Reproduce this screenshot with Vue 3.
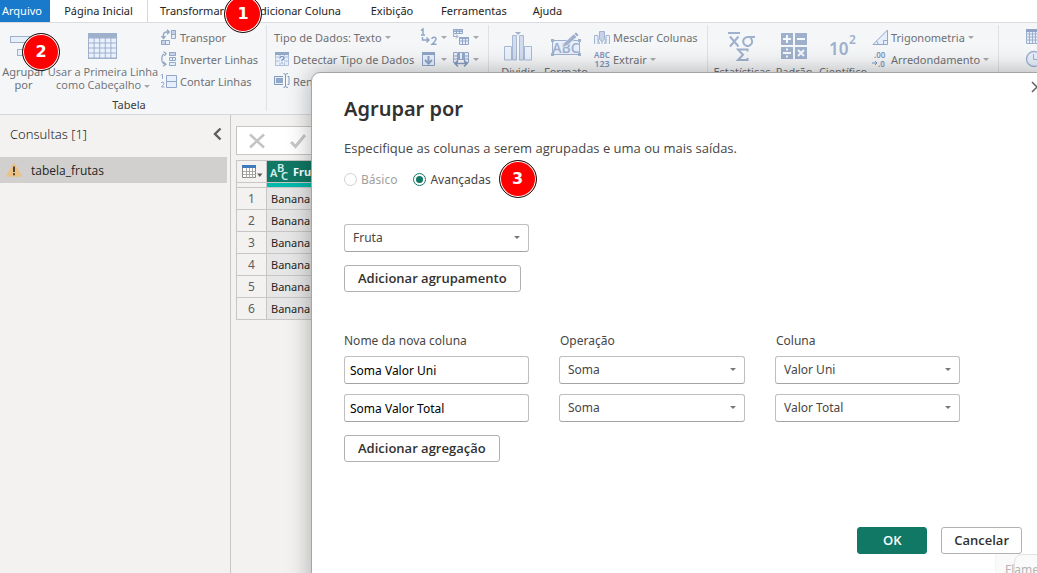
<script setup>
import { ref, reactive } from 'vue'

const tabs = ['Ferramentas', 'Ajuda']
const rows = ['Banana', 'Banana', 'Banana', 'Banana', 'Banana', 'Banana']
const mode = ref('advanced')
const groupColumn = ref('Fruta')
const aggregations = reactive([
  { name: 'Soma Valor Uni', op: 'Soma', column: 'Valor Uni' },
  { name: 'Soma Valor Total', op: 'Soma', column: 'Valor Total' }
])
</script>

<template>
  <div class="app">
    <nav class="tabs">
      <button class="tab file">Arquivo</button>
      <button class="tab home">Página Inicial</button>
      <button class="tab active">Transformar</button>
      <button class="tab add">Adicionar Coluna</button>
      <button class="tab view">Exibição</button>
      <button v-for="t in tabs" :key="t" class="tab">{{ t }}</button>
    </nav>

    <div class="ribbon">
      <section class="group g-table">
        <div class="tools">
          <button class="big b-group">
            <svg width="30" height="30" viewBox="0 0 30 30" fill="#e6effb" stroke="#9fb0cd">
              <rect x="1.5" y="4.500" width="24" height="6" /><rect x="8.500" y="17.500" width="17" height="6" />
            </svg>
            <span>Agrupar<br>por</span>
          </button>
          <button class="big b-first">
            <svg width="30" height="30" viewBox="0 0 30 30">
              <rect x="0" y="1" width="29" height="26" fill="#9fb0cd" />
              <g fill="#e9f1fc">
                <template v-for="r in 4" :key="r">
                  <rect v-for="c in 5" :key="c" :x="c * 5.6 - 4.600" :y="r * 5 + 1.500" width="4.600" height="4" />
                </template>
              </g>
            </svg>
            <span>Usar a Primeira Linha<br>como Cabeçalho <i class="caret"></i></span>
          </button>
          <div class="stack">
            <button class="small">
              <svg width="16" height="16" viewBox="0 0 16 16" fill="none" stroke="#93a7c8">
                <path d="M10.500 1.500h4v8h-4zM10.500 5.500h4M.5 11.500h8v4h-8zM4.500 11.500v4" fill="#e6effb" />
                <path d="M10.500 1.500h4v4h-4zM.5 11.500h4v4h-4z" fill="#c5d2e8" />
                <path d="M2.500 9V6q0-3 3-3H8M.5 7l2 2.500L4.500 7M6 .8 8.300 3 6 5.200" stroke-width="1.300" />
              </svg>Transpor
            </button>
            <button class="small">
              <svg width="16" height="16" viewBox="0 0 16 16" fill="none" stroke="#93a7c8">
                <path d="M8.500 1.500h6v3h-6zM8.500 6.500h6v3h-6zM8.500 11.500h6v3h-6zM11.500 6.500v3" fill="#e6effb" />
                <path d="M8.500 1.500h6v3h-6z" fill="#c5d2e8" />
                <path d="M3 3Q.8 4 .8 8T4 13.300M2.500.8 5 2.500 3.500 5M2 10.800l3 2.500-3 2" stroke-width="1.300" />
              </svg>Inverter Linhas
            </button>
            <button class="small">
              <svg width="16" height="16" viewBox="0 0 16 16" fill="#e6effb" stroke="#93a7c8">
                <path d="M5.500 2.500h10v12h-10zM5.500 8.500h10" />
                <path d="M0 2.500 1.500 1v5M0 9.500q3-1 3 .7Q3 11.500.5 14h3" fill="none" />
              </svg>Contar Linhas
            </button>
          </div>
        </div>
        <div class="group-name">Tabela</div>
      </section>

      <section class="group g-any">
        <div class="tools">
          <div class="stack type">
            <button class="small">Tipo de Dados: Texto <i class="caret"></i></button>
            <button class="small">
              <svg width="16" height="16" viewBox="0 0 16 16" fill="#e6effb" stroke="#b1c0da">
                <path d="M1.500 1.500h13v13h-13zM1.500 6h13M1.500 10h13M6 3v11M10.500 3v11" />
                <path d="M1 1h14v3H1z" fill="#93a7c8" stroke="none" />
                <path d="M5.500 5h5v7h-5z" stroke="none" />
                <path d="M6 7.200Q6 5.500 8 5.500t2 1.600Q10 8.500 8 9v1M8 11.300v1.200" fill="none" stroke="#7189b3" stroke-width="1.200" />
              </svg>Detectar Tipo de Dados
            </button>
            <button class="small">
              <svg width="16" height="16" viewBox="0 0 16 16" fill="none" stroke="#8399be">
                <path d="M9 3.500H.5v8H9" fill="#e6effb" /><path d="M2 5h7v5H2z" fill="#93a7c8" stroke="none" />
                <path d="M9.500.5q2 0 2 1.500v11q0 1.500-2 1.500M14 .5q-2.500 0-2.500 1.500M14 14.500q-2.500 0-2.500-1.500M13.500 3.500h1.500v8h-1.500" />
              </svg>Renomear
            </button>
          </div>
          <div class="icon-grid">
            <button class="small" aria-label="Substituir Valores">
              <svg width="18" height="18" viewBox="0 0 18 18" fill="none" stroke="#8fa4c6" stroke-width="1.400">
                <path d="M1 2.500 3 1v6M1 7h4M2.500 9v3h6M6.500 9.500 9 12l-2.500 2.500M12 11q0-1.800 2-1.800t2 1.800q0 1.500-4 5.300h4.500" />
              </svg><i class="caret"></i>
            </button>
            <button class="small" aria-label="Dinamizar">
              <svg width="18" height="18" viewBox="0 0 18 18" fill="#e6effb" stroke="#93a7c8">
                <path d="M1.500 1.500h9v4h-9zM1.500 3.500h9M4.500 1.500v4M7.500 1.500v4M7.500 9.500h9v7h-9zM7.500 13h9M10.500 11v5M13.500 11v5" />
                <path d="M1 1h10v1.500H1zM7 9h10v2H7z" fill="#93a7c8" stroke="none" />
                <path d="M1.500 6v2.500h4M4 6.500l2 2-2 2" fill="none" />
              </svg><i class="caret"></i>
            </button>
            <button class="small" aria-label="Preencher">
              <svg width="18" height="18" viewBox="0 0 18 18" fill="#e6effb" stroke="#8fa4c6">
                <path d="M2.500 2.500h12v13h-12z" /><path d="M2 2h13v3H2z" fill="#8fa4c6" stroke="none" />
                <path d="M8.500 6v7M5 10l3.500 3.500L12 10" fill="none" stroke-width="2" />
              </svg><i class="caret"></i>
            </button>
            <button class="small" aria-label="Mover">
              <svg width="18" height="18" viewBox="0 0 18 18" fill="#e6effb" stroke="#93a7c8">
                <path d="M1.500 2.500h4v10h-4zM12.500 2.500h4v10h-4zM1.500 6h4M1.500 9h4M12.500 6h4M12.500 9h4" />
                <path d="M6 2h6v8H6z" fill="#93a7c8" stroke="none" /><path d="M8 3h2v6H8z" stroke="none" />
                <path d="M3 13.500h12M6 10.500l-3 3 3 3M12 10.500l3 3-3 3" fill="none" stroke="#8399be" stroke-width="1.600" />
              </svg><i class="caret"></i>
            </button>
          </div>
        </div>
      </section>

      <section class="group g-text">
        <div class="tools">
          <button class="big b-split">
            <svg width="30" height="30" viewBox="0 0 30 30" fill="#e9f1fc" stroke="#a9b8d3">
              <path d="M1.500 28V14.500h7V28zM21.500 28V14.500h7V28z" />
              <path d="M9.500 28V3.500h4V28zM16.500 28V3.500h4V28z" fill="#d0dcef" />
              <path d="M12 0h6l-3 3z" fill="#9fb0cd" stroke="none" />
            </svg>
            <span>Dividir</span>
          </button>
          <button class="big b-format">
            <svg width="32" height="30" viewBox="0 0 32 30" fill="none" stroke="#9fb0cd">
              <path d="M2.500 8.500h27v14h-27z" fill="#e6effb" />
              <path d="M1 7h3v3H1zM28 7h3v3h-3zM1 21h3v3H1zM28 21h3v3h-3z" fill="#9fb0cd" stroke="none" />
              <text x="16" y="21" text-anchor="middle" class="ic-abc">ABC</text>
              <path d="m12 16 2-5L26 0l3 3-11 10z" fill="#9fb0cd" stroke="#f4f6f9" stroke-width=".6" />
              <path d="m23.500 1.500 4 4" stroke="#f4f6f9" />
            </svg>
            <span>Formato</span>
          </button>
          <div class="stack">
            <button class="small">
              <svg width="16" height="16" viewBox="0 0 16 16" fill="#e9f1fc" stroke="#a3b3d0">
                <path d="M.5 15V6.500H4V15M15.500 15V6.500H12V15" /><path d="M5.500 2.500h5V10L8 13l-2.500-3z" fill="#c5d2e8" />
                <path d="m4 10 1.500 5M12 10l-1.500 5M8 13v2" />
              </svg>Mesclar Colunas
            </button>
            <button class="small">
              <svg width="16" height="18" viewBox="0 0 16 18" class="ic-small">
                <text x="8" y="8" text-anchor="middle">ABC</text><text x="8" y="17" text-anchor="middle" class="digits">123</text>
              </svg>Extrair <i class="caret"></i>
            </button>
          </div>
        </div>
      </section>

      <section class="group g-number">
        <div class="tools">
          <button class="big b-stat">
            <svg width="30" height="30" viewBox="0 0 30 30" fill="none" stroke="#9fb0cd" stroke-width="2">
              <path d="M1 1h12M3 4.500l8.500 10M11.500 4.500l-8.500 10" />
              <path d="M28 5h-7.500a4.500 4.500 0 1 0 3 1" />
              <path d="M20.500 19.500V17.500H11l5 5.300-5 5.200h9.500v-2" />
            </svg>
            <span>Estatísticas</span>
          </button>
          <button class="big b-standard">
            <svg width="28" height="30" viewBox="0 0 28 30" fill="none" stroke="#f4f7fc" stroke-width="2">
              <path d="M1 1h12v12H1zM15 1h12v12H15zM1 15h12v12H1zM15 15h12v12H15z" fill="#9fb0cd" stroke="none" />
              <path d="M3 7h8M7 3v8M17 7h8M3 21h8M6 17.500h2M6 24.500h2M18 18l6 6M24 18l-6 6" />
            </svg>
            <span>Padrão</span>
          </button>
          <button class="big b-sci">
            <svg width="28" height="30" viewBox="0 0 28 30" class="ic-sci">
              <text x="0" y="23" class="ten">10</text><text x="20" y="12" class="two">2</text>
            </svg>
            <span>Científico</span>
          </button>
          <div class="stack">
            <button class="small">
              <svg width="16" height="16" viewBox="0 0 16 16" fill="#e6effb" stroke="#93a7c8">
                <path d="M1 15.500 15.500 1v14.500zM11.500 15.500v-4h4M6 15q0-2.500-2-3" />
              </svg>Trigonometria <i class="caret"></i>
            </button>
            <button class="small">
              <svg width="16" height="18" viewBox="0 0 16 18" class="ic-small">
                <text x="2" y="8">.00</text><text x="6" y="17">.0</text>
                <path d="M0 13h5M3 11l2 2-2 2" fill="none" stroke="#7f95bb" />
              </svg>Arredondamento <i class="caret"></i>
            </button>
          </div>
        </div>
      </section>

      <section class="group g-date">
        <div class="stack">
          <button class="small" aria-label="Data">
            <svg width="18" height="18" viewBox="0 0 18 18" fill="#e6effb" stroke="#9fb0cd">
              <path d="M1.500 1.500h15v14h-15zM1.500 6h15M1.500 9h15M1.500 12h15M4.500 4v12M7.500 4v12M10.500 4v12M13.500 4v12" />
              <path d="M1 1h16v3H1z" fill="#8fa4c6" stroke="none" />
            </svg>
          </button>
          <button class="small" aria-label="Hora">
            <svg width="18" height="18" viewBox="0 0 18 18" fill="#e6effb" stroke="#9fb0cd">
              <circle cx="9" cy="9" r="7.500" stroke-width="1.300" /><path d="M8.500 4v5.500h4" fill="none" />
            </svg>
          </button>
        </div>
      </section>
    </div>

    <div class="workspace">
      <aside class="queries">
        <header>
          <h2>Consultas [1]</h2>
          <button class="plain" aria-label="Recolher">
            <svg width="9" height="14" viewBox="0 0 9 14" fill="none" stroke="#605e5c" stroke-width="2.400"><path d="M7.500 1.500 2 7l5.500 5.500" /></svg>
          </button>
        </header>
        <a class="query" href="#">
          <svg width="16" height="14" viewBox="0 0 16 14">
            <path d="M8 1 15 13H1z" fill="#ecc184" stroke="#ecc184" stroke-width="1.500" stroke-linejoin="round" />
            <path d="M8 3.500V9M8 10.200v2" stroke="#4a4238" stroke-width="2" />
          </svg>
          tabela_frutas
        </a>
      </aside>
      <main class="preview">
        <div class="formula">
          <svg width="18" height="18" viewBox="0 0 18 18" fill="none" stroke="#c4c4c4" stroke-width="2.500"><path d="m2 2.500 14 13M16 2.500l-14 13" /></svg>
          <svg width="18" height="18" viewBox="0 0 18 18" fill="none" stroke="#c8c8c8" stroke-width="3"><path d="m2 10 4.500 4.500L16 3" /></svg>
        </div>
        <table>
          <thead>
            <tr>
              <th class="corner">
                <svg width="22" height="14" viewBox="0 0 22 14">
                  <path d="M.5.5h13v12H.5z" fill="#fff" stroke="#8a8886" />
                  <path d="M1 6.500h13M1 9.500h13M4.500 3v10M7.500 3v10M10.500 3v10" stroke="#a9a7a5" />
                  <path d="M0 0h14v3H0z" fill="#3f7abf" /><path d="M15 8.500h5.500L17.800 12z" fill="#605e5c" />
                </svg>
              </th>
              <th class="col">
                <div>
                  <svg width="19" height="18" viewBox="0 0 19 18" class="ic-type">
                    <text x="0" y="14">A</text><text x="7" y="9">B</text><text x="11" y="17">C</text>
                  </svg>Fruta
                </div>
              </th>
            </tr>
            <tr class="quality"><td></td><td></td></tr>
          </thead>
          <tbody>
            <tr v-for="(r, i) in rows" :key="i"><th>{{ i + 1 }}</th><td>{{ r }}</td></tr>
          </tbody>
        </table>
      </main>
    </div>

    <section class="dialog" role="dialog" aria-labelledby="dialog-title">
      <button class="plain close" aria-label="Fechar">
        <svg width="12" height="12" viewBox="0 0 12 12" fill="none" stroke="#605e5c" stroke-width="1.500"><path d="m1 1 10 10M11 1 1 11" /></svg>
      </button>
      <h1 id="dialog-title">Agrupar por</h1>
      <p>Especifique as colunas a serem agrupadas e uma ou mais saídas.</p>
      <div class="modes">
        <label class="off"><input v-model="mode" type="radio" name="mode" value="basic">Básico</label>
        <label><input v-model="mode" type="radio" name="mode" value="advanced">Avançadas</label>
        <span class="step">3</span>
      </div>
      <div class="fields">
        <div class="select">
          <select v-model="groupColumn" aria-label="Coluna de agrupamento"><option>Fruta</option></select>
          <i class="caret"></i>
        </div>
      </div>
      <button class="btn">Adicionar agrupamento</button>

      <div class="fields aggs">
        <label for="name-0">Nome da nova coluna</label>
        <label for="op-0">Operação</label>
        <label for="col-0">Coluna</label>
        <template v-for="(a, i) in aggregations" :key="i">
          <input :id="'name-' + i" v-model="a.name" type="text" aria-label="Nome da nova coluna">
          <div class="select">
            <select :id="'op-' + i" v-model="a.op" aria-label="Operação"><option>Soma</option></select>
            <i class="caret"></i>
          </div>
          <div class="select">
            <select :id="'col-' + i" v-model="a.column" aria-label="Coluna"><option>Valor Uni</option><option>Valor Total</option></select>
            <i class="caret"></i>
          </div>
        </template>
      </div>
      <button class="btn">Adicionar agregação</button>

      <footer>
        <button class="btn ok">OK</button>
        <button class="btn cancel">Cancelar</button>
      </footer>
    </section>

    <span class="step pin one">1</span>
    <span class="step pin two">2</span>
    <div class="toast"><div class="toast-edge"></div><span>Flameshot</span></div>
  </div>
</template>

<style>
html, body { margin: 0; background: #f3f2f1; }
</style>

<style scoped>
.app { position: relative; min-height: 100vh; overflow: hidden; display: flex; flex-direction: column; font-family: "Noto Sans", "Open Sans", sans-serif; font-size: 11px; color: #252423; background: #f3f2f1; }
.app * { box-sizing: border-box; }
button, input, select { font: inherit; color: inherit; margin: 0; }
button { border: 0; padding: 0; background: none; white-space: nowrap; }
svg { flex: none; display: block; overflow: visible; }

.tabs { display: flex; height: 23px; background: #fff; border-bottom: 1px solid #d9dbde; }
.tab { padding: 0 13px; height: 22px; line-height: 22px; }
.tab.file { background: #1979ca; color: #fff; width: 50px; padding: 0; padding-right: 6px; }
.tab.home { width: 98px; border-right: 1px solid #d5d7da; }
.tab.active { padding: 0 12px; width: 88px; }
.tab.add { width: 120px; padding: 0; text-align: right; padding-right: 15px; }
.tab.view { width: 72px; }

.ribbon { display: flex; height: 92px; padding-top: 2px; background: #f4f6f8; border-bottom: 1px solid #d5d7da; color: #6f7074; }
.group { flex: none; height: 86px; border-right: 1px solid #dfe1e4; padding-top: 1px; }
.g-table { width: 267px; }
.g-any { width: 222px; padding-left: 7px; }
.g-text { width: 219px; padding-left: 12px; }
.g-number { width: 291px; padding-left: 4px; }
.g-date { flex: 1; padding-left: 24px; overflow: hidden; border: 0; }
.tools { display: flex; }
.group-name { text-align: center; color: #3b3a39; line-height: 26px; padding-right: 8px; }
.big { height: 66px; display: flex; flex-direction: column; align-items: center; padding-top: 6px; line-height: 13px; overflow: visible; }
.big span { margin-top: 3px; }
.b-group { width: 47px; }
.b-first { width: 112px; font-family: "Open Sans", sans-serif; }
.b-split { width: 34px; }
.b-format { width: 62px; }
.b-stat { width: 60px; }
.b-standard { width: 44px; }
.b-sci { width: 54px; }
.g-text .stack { margin-left: -3px; }
.stack { display: flex; flex-direction: column; margin-left: 2px; }
.stack.type { margin-left: 0; width: 146px; }
.small { height: 22px; display: flex; align-items: center; gap: 3px; }
.icon-grid { display: grid; grid-template-columns: 32px 32px; grid-auto-rows: 22px; align-content: start; }
.caret { display: inline-block; flex: none; width: 0; height: 0; border: 3px solid transparent; border-top: 3px solid #a6a7aa; border-bottom: 0; vertical-align: middle; }
.ic-abc { font: 600 14px "Open Sans", sans-serif; fill: #9fb0cd; stroke: none; }
.ic-small { font: 600 8px "Noto Sans", sans-serif; fill: #7f95bb; }
.digits { font-size: 9px; }
.ic-sci { fill: #9fb0cd; font-family: "Noto Sans", sans-serif; font-weight: 600; }
.ten { font-size: 17px; }
.two { font-size: 12px; }

.workspace { flex: 1; display: flex; }
.queries { width: 231px; border-right: 1px solid #c8c6c4; padding-right: 3px; }
.queries header { display: flex; justify-content: space-between; align-items: center; height: 42px; padding: 0 5px 4px 10px; }
.queries h2 { margin: 0; font-size: 13px; font-weight: 300; font-family: "Noto Sans", sans-serif; }
.query { display: flex; align-items: center; gap: 9px; height: 26px; padding-left: 6px; background: #d2d0ce; color: #252423; font-family: "Open Sans", sans-serif; font-size: 12px; text-decoration: none; }
.preview { flex: 1; padding: 11px 0 0 5px; }
.formula { display: flex; align-items: center; gap: 23px; height: 29px; padding-left: 11px; background: #fff; border: 1px solid #c8c6c4; margin-bottom: 5px; }
table { border-collapse: collapse; table-layout: fixed; width: 160px; }
td, th { border: 1px solid #c8c6c4; height: 22px; padding: 0 4px; font-weight: 400; text-align: left; line-height: 18px; }
tbody th { text-align: center; font-size: 12px; color: #605e5c; }
tbody td { background: #e6e6e6; font-size: 11px; color: #252423; }
.corner { width: 30px; }
.corner svg { margin-left: 1px; }
.col { background: #117865; color: #fff; font-weight: 700; font-size: 11px; padding: 0 3px; }
.col div { display: flex; align-items: center; gap: 4px; }
.ic-type { font: 600 11px "Noto Sans", sans-serif; fill: #d5eee8; }
.quality td { height: 5px; line-height: 0; padding: 0; }
.quality td + td { background: #01b8aa; }

.dialog { position: absolute; top: 72px; left: 311px; right: -18px; bottom: -20px; padding: 21px 32px 0; background: #fff; border: 1px solid #a5a5a5; border-radius: 9px; box-shadow: 0 0 24px rgba(0, 0, 0, .3); font-size: 12px; color: #484644; }
.close { position: absolute; top: 8px; right: 11px; }
h1 { margin: 0; font-size: 20px; line-height: 30px; font-weight: 600; color: #323130; }
p { margin: 14px 0 0; font-family: "Open Sans", sans-serif; font-size: 13px; line-height: 20px; }
.modes { display: flex; align-items: center; height: 38px; margin-top: 2px; }
.modes label { display: flex; align-items: center; gap: 4px; margin-right: 16px; }
.modes label + label { margin-right: 8px; }
.modes input { appearance: none; width: 13px; height: 13px; border: 1px solid #117865; border-radius: 50%; display: grid; place-items: center; }
.modes input:checked::after { content: ""; width: 7px; height: 7px; border-radius: 50%; background: #117865; }
.modes .off { color: #a19f9d; }
.modes .off input { border-color: #d2d0ce; }
.fields { display: grid; grid-template-columns: 185px 186px 185px; column-gap: 30px; row-gap: 10px; margin: 26px 0 13px; }
.fields.aggs { margin-top: 39px; }
.fields.aggs > label { line-height: 20px; margin-bottom: -5px; }
.fields.aggs > label + label { padding-left: 1px; }
.select { position: relative; height: 28px; }
.select select { appearance: none; width: 100%; height: 100%; padding: 0 8px 1px; border: 1px solid #c0bfbd; border-bottom-color: #a5a4a2; border-radius: 3px; background: #fff; }
.select .caret { position: absolute; right: 9px; top: 12px; border-top-color: #797775; }
.fields input { width: 100%; height: 28px; padding: 0 5px; border: 1px solid #c0bfbd; border-bottom-color: #a5a4a2; border-radius: 3px; color: #000; background: #fff; }
.btn { display: block; height: 27px; padding: 0 13px 2px; border: 1px solid #b3b0ad; border-radius: 3px; background: #fff; color: #323130; font-family: "Open Sans", sans-serif; font-size: 13px; font-weight: 600; }
footer { display: flex; gap: 14px; justify-content: flex-end; margin-top: 65px; }
.btn.ok { width: 70px; background: #117865; border-color: #117865; color: #fff; }
.btn.cancel { padding: 0 12px 2px; }

.step { flex: none; display: grid; place-items: center; width: 38px; height: 38px; border-radius: 50%; background: #f00; border: 1px solid #1a1a1a; box-shadow: inset 0 0 0 1px #fff; color: #fff; font: 700 16px/1 "DejaVu Sans", sans-serif; }
.pin { position: absolute; }
.one { left: 224px; top: -5px; }
.two { left: 22px; top: 33px; }
.toast { position: absolute; right: 0; bottom: 0; width: 42px; height: 19px; padding: 6px 0 0 9px; overflow: hidden; background: rgba(249, 249, 249, .8); color: #b5b5b5; font-size: 12px; line-height: 20px; border-left: 1px solid #f4f4f4; }
.toast-edge { position: absolute; left: 18px; top: 0; width: 60px; height: 40px; border: 1px solid #e3e3e3; border-radius: 8px; }
</style>
